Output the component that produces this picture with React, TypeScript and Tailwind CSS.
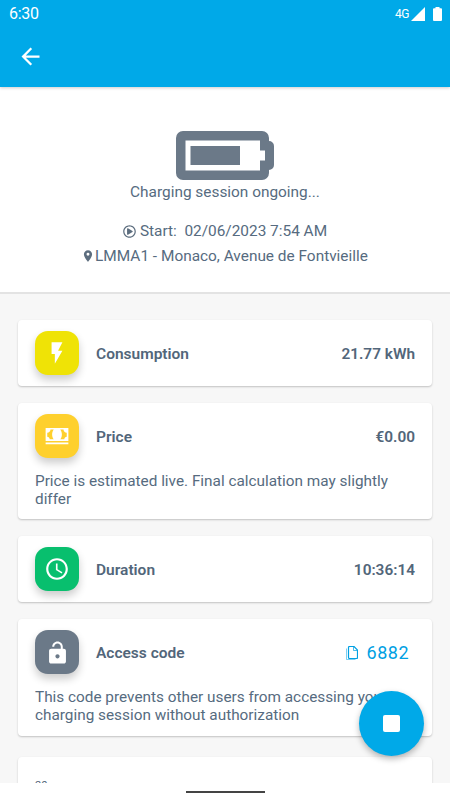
import React from 'react';
import { IoMdCash, IoMdUnlock } from 'react-icons/io';
import { MdAccessTime, MdArrowBack, MdFlashOn, MdPlace } from 'react-icons/md';
import { FaRegPlayCircle } from 'react-icons/fa';

interface InfoCardProps {
    icon: React.ReactNode;
    iconBg: string;
    label: string;
    value: React.ReactNode;
    note?: string;
    className: string;
}

const InfoCard = ({ icon, iconBg, label, value, note, className }: InfoCardProps) => (
    <div className={`shrink-0 rounded bg-white px-[17px] pt-[11px] shadow-[0_1px_2px_rgba(0,0,0,0.22)] ${className}`}>
        <div className="flex h-11 items-center">
            <div className={`flex size-11 items-center justify-center rounded-[13px] text-white shadow-[0_5px_9px_rgba(0,0,0,0.2)] ${iconBg}`}>
                {icon}
            </div>
            <span className="ml-[17px] pt-[3px] text-[15.5px] font-semibold">{label}</span>
            <div className="ml-auto pt-[3px] text-[15.4px] font-semibold">{value}</div>
        </div>
        {note && <p className="mt-[14px] w-[375px] text-[15.33px] leading-[18px] text-[#566b80]">{note}</p>}
    </div>
);

const StatusIcons = () => (
    <div className="flex items-center">
        <span className="text-xs leading-[14px] tracking-[-0.4px]">4G</span>
        <svg className="ml-[2px] h-[14px] w-[14px]" viewBox="0 0 14 14" fill="currentColor">
            <path d="M14 0v14H0z" />
        </svg>
        <svg className="ml-[8px] h-[14px] w-[9px]" viewBox="0 0 9 14" fill="currentColor">
            <path d="M2.5 0h4v1.3H8a1 1 0 0 1 1 1V13a1 1 0 0 1-1 1H1a1 1 0 0 1-1-1V2.3a1 1 0 0 1 1-1h1.5z" />
        </svg>
    </div>
);

const BatteryIcon = () => (
    <svg className="h-[49px] w-[98px]" viewBox="0 0 98 49">
        <path
            d="M7 0h79a7 7 0 0 1 7 7v3a5 5 0 0 1 5 5v19a5 5 0 0 1-5 5v3a7 7 0 0 1-7 7H7a7 7 0 0 1-7-7V7a7 7 0 0 1 7-7z"
            fill="#6b7988"
        />
        <path d="M9.5 9.5H84v10h5v10h-5v10H9.5z" fill="#fff" />
        <path d="M14.5 15H64v19H14.5z" fill="#6b7988" />
    </svg>
);

const CopyIcon = () => (
    <svg className="h-[14px] w-3" viewBox="0 0 12 14" fill="none" stroke="currentColor">
        <path d="M.5 2.5v11h9" opacity=".5" />
        <path d="M2.5 1.5a1 1 0 0 1 1-1H8l3.5 3.5v7.5a1 1 0 0 1-1 1h-7a1 1 0 0 1-1-1z" strokeWidth="1.2" />
        <path d="M7.5.5v4h4" opacity=".7" />
    </svg>
);

export default function App() {
    return (
        <div className="flex h-[800px] w-[450px] flex-col overflow-hidden bg-white font-['Roboto',sans-serif] text-[#52667a]">
            <header className="z-10 h-[87px] shrink-0 bg-[#00a9e8] text-white shadow-[0_1px_3px_rgba(0,0,0,0.2)]">
                <div className="flex h-[27px] items-center justify-between pr-2 pl-[9px]">
                    <span className="pt-px text-base leading-none tracking-[-0.3px]">6:30</span>
                    <StatusIcons />
                </div>
                <button className="mt-[16px] ml-[17px] block" aria-label="Back">
                    <MdArrowBack className="size-[27px]" />
                </button>
            </header>

            <section className="flex h-[207px] shrink-0 flex-col items-center border-b-2 border-[#e3e3e3] pt-11 text-[15.4px] text-[#566b80]">
                <BatteryIcon />
                <p className="mt-0.5 leading-5">Charging session ongoing...</p>
                <div className="mt-[19px] flex items-center leading-5">
                    <FaRegPlayCircle className="mr-1 size-[13px] text-[#5c6d7e]" />
                    <span className="whitespace-pre">Start:  02/06/2023 7:54 AM</span>
                </div>
                <div className="mt-[5px] flex items-center leading-5">
                    <MdPlace className="-ml-px size-[14px] text-[#5c6d7e]" />
                    <span>LMMA1 - Monaco, Avenue de Fontvieille</span>
                </div>
            </section>

            <main className="relative flex h-[489px] shrink-0 flex-col overflow-hidden bg-[#f7f7f7] pt-[26px] pr-[18px] pl-[18px]">
                <InfoCard
                    className="h-[66px]"
                    iconBg="bg-[#efe306]"
                    icon={<MdFlashOn className="size-[26px]" />}
                    label="Consumption"
                    value="21.77 kWh"
                />
                <InfoCard
                    className="mt-[17px] h-[116px]"
                    iconBg="bg-[#fed02d]"
                    icon={<IoMdCash className="size-[26px]" />}
                    label="Price"
                    value="€0.00"
                    note="Price is estimated live. Final calculation may slightly differ"
                />
                <InfoCard
                    className="mt-[17px] h-[66px]"
                    iconBg="bg-[#08bf6e]"
                    icon={<MdAccessTime className="size-[26px]" />}
                    label="Duration"
                    value="10:36:14"
                />
                <InfoCard
                    className="mt-[17px] h-[117px]"
                    iconBg="bg-[#6b7988]"
                    icon={<IoMdUnlock className="size-[27px]" />}
                    label="Access code"
                    value={
                        <button className="mr-1.5 -mt-0.5 flex items-center text-lg font-normal tracking-[0.5px] text-[#00a0e3]">
                            <CopyIcon />
                            <span className="ml-[9px]">6882</span>
                        </button>
                    }
                    note="This code prevents other users from accessing your charging session without authorization"
                />
                <div className="mt-[21px] h-24 shrink-0 rounded bg-white px-[17px] pt-[23px] shadow-[0_1px_2px_rgba(0,0,0,0.22)]">
                    <span className="block text-[11px] leading-3">20</span>
                </div>
                <button
                    className="absolute top-[397px] left-[359px] flex size-[65px] items-center justify-center rounded-full bg-[#00a9e8] shadow-[0_3px_6px_rgba(0,0,0,0.28)]"
                    aria-label="Stop charging"
                >
                    <span className="size-[17px] rounded-[2px] bg-white" />
                </button>
            </main>

            <footer className="flex flex-1 justify-center bg-white pt-2">
                <div className="h-0.5 w-[79px] bg-[#444]" />
            </footer>
        </div>
    );
}
